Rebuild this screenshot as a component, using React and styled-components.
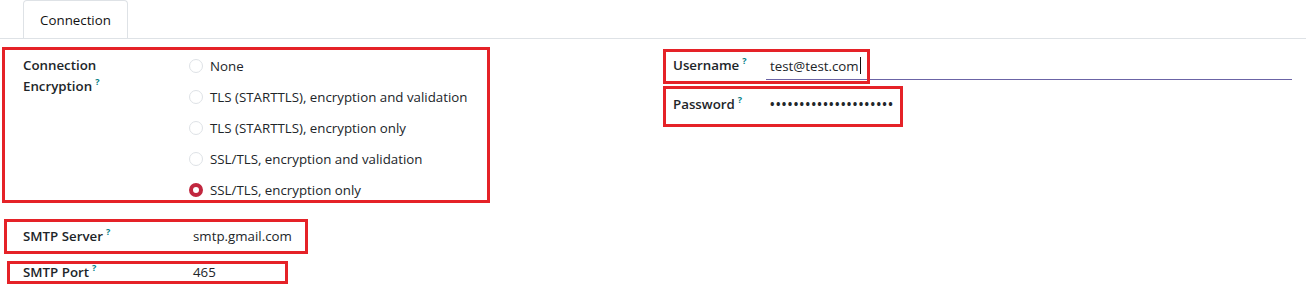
import React from 'react';
import styled, { createGlobalStyle, css } from 'styled-components';

const GlobalStyle = createGlobalStyle`
    body {
        margin: 0;
        background: #fff;
        font-family: "Open Sans", "Noto Sans", sans-serif;
        font-size: 13.3px;
        color: #212529;
    }
`;

const Page = styled.div`
    width: 1306px;
    height: 302px;
    overflow: hidden;
`;
const TabBar = styled.div`
    display: flex;
    height: 38px;
    padding-left: 23px;
    border-bottom: 1px solid #dee2e6;
`;
const Tab = styled.div`
    width: 105px;
    height: 38px;
    box-sizing: border-box;
    display: flex;
    align-items: center;
    justify-content: center;
    border: 1px solid #dee2e6;
    border-bottom: none;
    border-radius: 4px 4px 0 0;
    background: #fff;
    color: #111;
`;
const Sheet = styled.div`
    display: grid;
    grid-template-columns: 650px 1fr;
    padding: 11px 14px 0 23px;
`;
const Column = styled.div`
    display: flex;
    flex-direction: column;
`;
const Field = styled.div`
    position: relative;
    display: grid;
    grid-template-columns: ${({labelWidth}) => labelWidth}px 1fr;
    align-items: ${({top}) => top ? 'start' : 'center'};
    min-height: 31px;
    ${({gap}) => gap && css`
        margin-top: ${gap}px;
    `}
`;
const Label = styled.div`
    font-weight: 600;
    line-height: 21px;
    ${({top}) => top && css`
        padding-top: 5px;
    `}
`;
const Help = styled.sup`
    color: #017e84;
    font-size: 9px;
    font-weight: 700;
    line-height: 0;
    margin-left: 3px;
    vertical-align: 6px;
`;
const Mark = styled.div`
    position: absolute;
    border: 3px solid #e52228;
    box-sizing: border-box;
    pointer-events: none;
    left: ${({x}) => x}px;
    top: ${({y}) => y}px;
    width: ${({w}) => w}px;
    height: ${({h}) => h}px;
`;
const RadioList = styled.div`
    display: flex;
    flex-direction: column;
`;
const RadioRow = styled.label`
    display: flex;
    align-items: center;
    gap: 7px;
    height: 31px;
`;
const RadioDot = styled.span`
    width: 14px;
    height: 14px;
    box-sizing: border-box;
    border-radius: 50%;
    border: 1px solid #dee2e6;
    background: #fff;
    ${({checked}) => checked && css`
        border: 4px solid #c1273f;
    `}
`;
const Value = styled.div`
    padding-left: 4px;
    line-height: 21px;
`;
const Input = styled.div`
    height: 27px;
    display: flex;
    align-items: center;
    padding-left: 4px;
    border-bottom: 1px solid ${({focused}) => focused ? '#6b64a6' : 'transparent'};
    align-self: start;
    margin-top: 2px;
`;
const Caret = styled.span`
    display: inline-block;
    width: 1px;
    height: 17px;
    background: #111;
    margin-left: 1px;
`;
const Dots = styled.span`
    font-weight: 700;
    letter-spacing: 1.4px;
    font-size: 12px;
`;

const options = [
    'None',
    'TLS (STARTTLS), encryption and validation',
    'TLS (STARTTLS), encryption only',
    'SSL/TLS, encryption and validation',
    'SSL/TLS, encryption only',
];

const App = () => {
    return (
        <Page>
            <GlobalStyle />
            <TabBar>
                <Tab>Connection</Tab>
            </TabBar>
            <Sheet>
                <Column>
                    <Field labelWidth={166} top>
                        <Label top>Connection<br />Encryption<Help>?</Help></Label>
                        <RadioList>
                            {options.map((o, i) => (
                                <RadioRow key={o}>
                                    <RadioDot checked={i === options.length - 1} />
                                    {o}
                                </RadioRow>
                            ))}
                        </RadioList>
                        <Mark x={-21} y={-3} w={488} h={156} />
                    </Field>
                    <Field labelWidth={166} gap={16}>
                        <Label>SMTP Server<Help>?</Help></Label>
                        <Value>smtp.gmail.com</Value>
                        <Mark x={-19} y={-2} w={304} h={35} />
                    </Field>
                    <Field labelWidth={166} gap={5}>
                        <Label>SMTP Port<Help>?</Help></Label>
                        <Value>465</Value>
                        <Mark x={-16} y={4} w={281} h={23} />
                    </Field>
                </Column>
                <Column>
                    <Field labelWidth={93}>
                        <Label>Username<Help>?</Help></Label>
                        <Input focused>test@test.com<Caret /></Input>
                        <Mark x={-10} y={-1} w={207} h={35} />
                    </Field>
                    <Field labelWidth={93} gap={8}>
                        <Label>Password<Help>?</Help></Label>
                        <Input><Dots>•••••••••••••••••••••</Dots></Input>
                        <Mark x={-10} y={-3} w={240} h={41} />
                    </Field>
                </Column>
            </Sheet>
        </Page>
    );
};

export default App;
